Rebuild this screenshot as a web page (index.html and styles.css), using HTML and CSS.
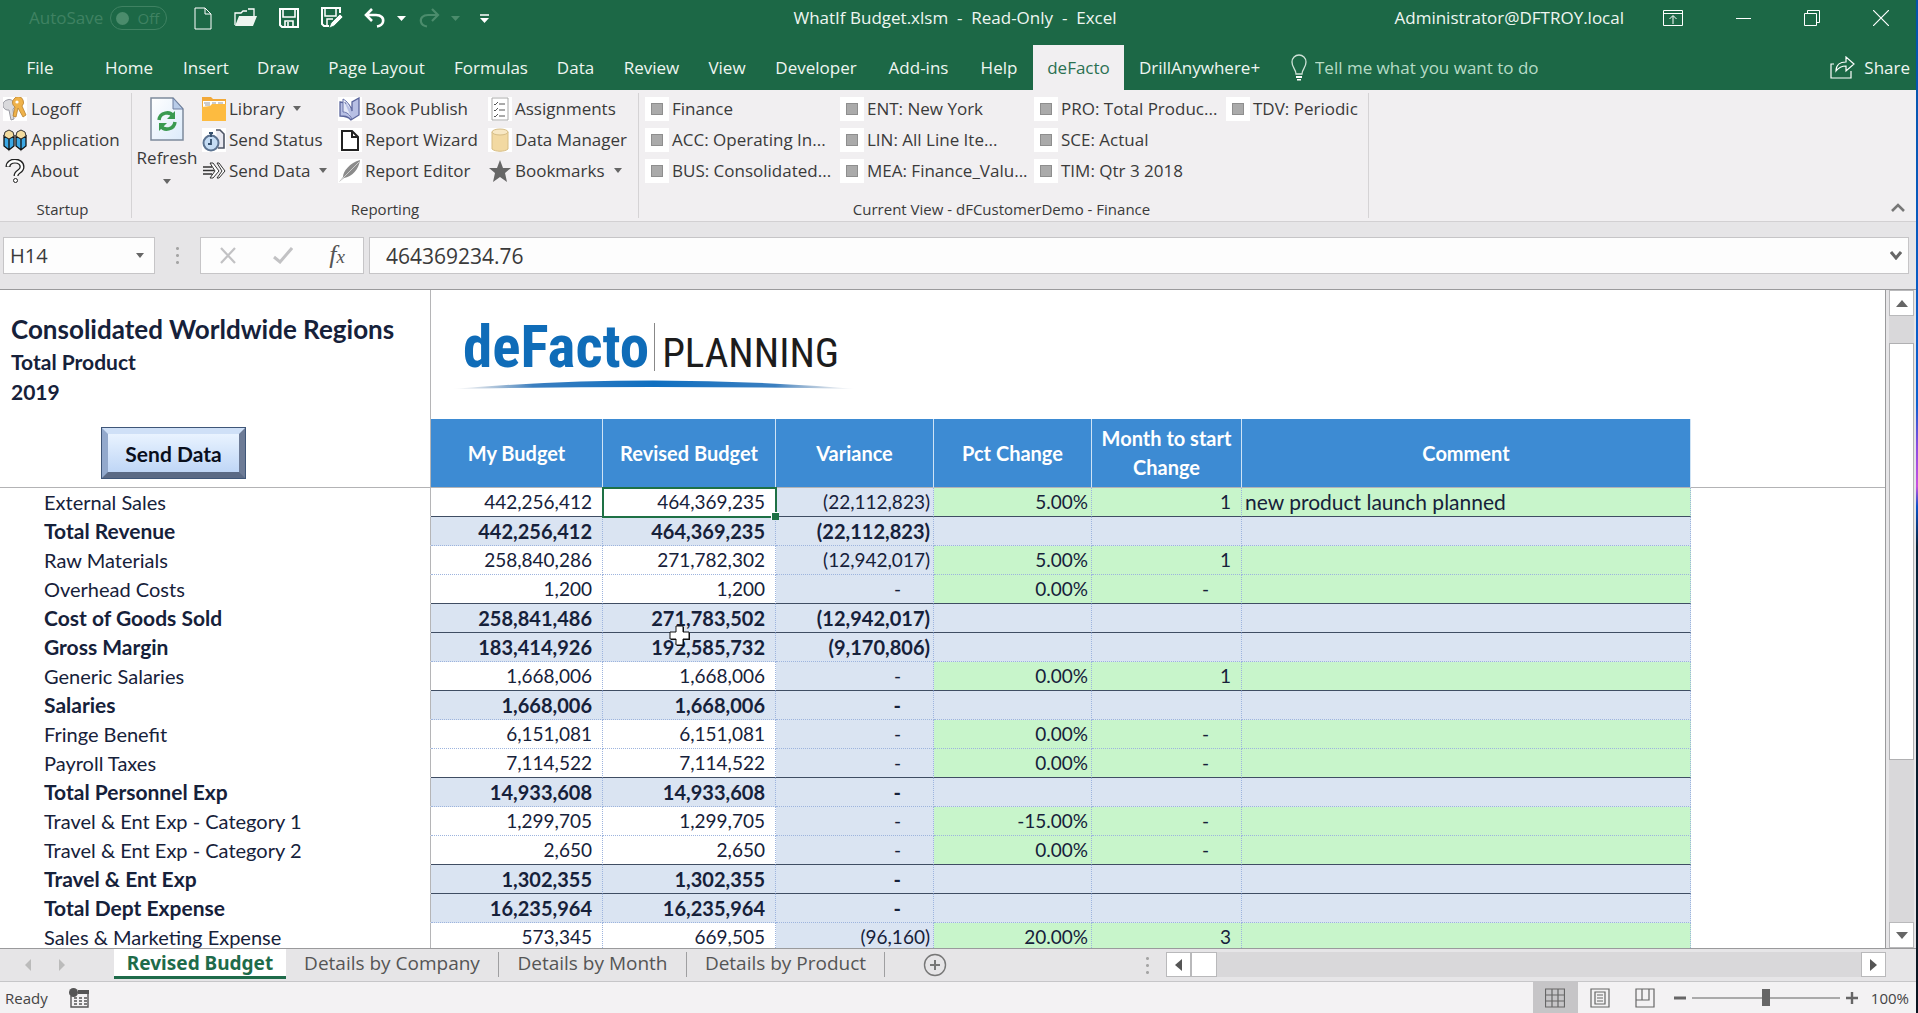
FILE: index.html
```html
<!DOCTYPE html>
<html lang="en">
<head>
<meta charset="utf-8">
<title>WhatIf Budget.xlsm - Read-Only - Excel</title>
<link rel="stylesheet" href="styles.css">
</head>
<body>
<div class="window">
<header class="top">
  <div class="titlebar">
    <div class="quick">
      <label class="autosave">AutoSave<span class="toggle"><input type="checkbox" disabled><span>Off</span></span></label>
      <button class="qbtn" aria-label="New"><svg width="18" height="23" viewBox="0 0 18 23"><path d="M1 1h10l6 6v15H1zM11 1v6h6" fill="none" stroke="#fff"/></svg></button>
      <button class="qbtn" aria-label="Open"><svg width="23" height="20" viewBox="0 0 23 20"><path d="M1 17V5h6l2-2h4M14 1h6v7" fill="none" stroke="#fff" stroke-width="1.3"/><path d="M5 8h18l-4 10H1z" fill="#eef5f0"/></svg></button>
      <button class="qbtn" aria-label="Save"><svg width="20" height="20" viewBox="0 0 20 20"><path d="M1 1h18v18H3l-2-2z" fill="none" stroke="#fff" stroke-width="2"/><path d="M4 2v7h12V2M6 19v-6h8v6M9 14v5" fill="none" stroke="#fff" stroke-width="1.6"/></svg></button>
      <button class="qbtn saveas" aria-label="Save as"><svg width="23" height="22" viewBox="0 0 23 22"><path d="M19 6V1H1v16l2 2h5" fill="none" stroke="#fff" stroke-width="2"/><path d="M4 2v7h11V2M6 18v-6h6" fill="none" stroke="#fff" stroke-width="1.5"/><path d="M8 21l2-5L19 7l3 3-9 9z" fill="#fff" stroke="#1c6846" stroke-width=".7"/></svg></button>
      <button class="qbtn undo" aria-label="Undo"><svg width="22" height="20" viewBox="0 0 22 20"><path d="M8 1L2 7l6 6M2 7h10c5 0 8 3 7 7-.6 2.500-3 4-6 4.500" fill="none" stroke="#fff" stroke-width="2.600"/></svg><svg width="9" height="5" viewBox="0 0 9 5"><path d="M0 0h9L4.500 5z" fill="#fff"/></svg></button>
      <button class="qbtn redo" aria-label="Redo"><svg width="22" height="20" viewBox="0 0 22 20"><path d="M14 1l6 6-6 6M20 7H10C5 7 2 10 3 14c.6 2.500 3 4 6 4.500" fill="none" stroke="#4b8c6c" stroke-width="2.200"/></svg><svg width="9" height="5" viewBox="0 0 9 5"><path d="M0 0h9L4.500 5z" fill="#4b8c6c"/></svg></button>
      <button class="qbtn" aria-label="Customize"><svg width="9" height="9" viewBox="0 0 9 9"><path d="M0 1h9" stroke="#fff" stroke-width="1.500"/><path d="M0 4h9L4.500 9z" fill="#fff"/></svg></button>
    </div>
    <h1 class="doc">WhatIf Budget.xlsm&nbsp; -&nbsp; Read-Only&nbsp; -&nbsp; Excel</h1>
    <div class="wctl">
      <span class="user">Administrator@DFTROY.local</span>
      <button aria-label="Ribbon display"><svg width="20" height="16" viewBox="0 0 20 16"><path d="M.5.5h19v15H.5zM.5 3.500h19M10 14V6M6.500 9L10 5.500 13.500 9" fill="none" stroke="#fff"/></svg></button>
      <button aria-label="Minimize"><svg width="15" height="16" viewBox="0 0 15 16"><path d="M0 8.500h15" stroke="#fff"/></svg></button>
      <button aria-label="Restore"><svg width="16" height="16" viewBox="0 0 16 16"><path d="M.5 3.500h12v12H.5zM3.500 3V.5h12v12H13" fill="none" stroke="#fff"/></svg></button>
      <button aria-label="Close"><svg width="16" height="16" viewBox="0 0 16 16"><path d="M0 0l16 16M16 0L0 16" stroke="#fff" stroke-width="1.200"/></svg></button>
    </div>
  </div>
  <nav class="tabs">
    <button class="file">File</button><button>Home</button><button>Insert</button><button>Draw</button><button>Page Layout</button><button>Formulas</button><button>Data</button><button>Review</button><button>View</button><button>Developer</button><button>Add-ins</button><button>Help</button><button class="on">deFacto</button><button>DrillAnywhere+</button>
    <label class="tell"><svg width="16" height="27" viewBox="0 0 16 27"><path d="M5 20c0-5-4-6-4-12a7 7 0 0 1 14 0c0 6-4 7-4 12z" fill="none" stroke="#cfe3d8" stroke-width="1.300"/><path d="M5 22h6v2H5zM6 25h4v1.500H6z" fill="#fff"/></svg><input type="text" placeholder="Tell me what you want to do" aria-label="Tell me what you want to do"></label>
    <button class="share"><svg width="25" height="23" viewBox="0 0 25 23"><path d="M4 8H1v14h20v-7" fill="none" stroke="#fff" stroke-width="1.200"/><path d="M6 15c0-6 4-9 10-9V1l8 7-8 7v-5c-4 0-7 1-10 5z" fill="none" stroke="#fff" stroke-width="1.200"/></svg>Share</button>
  </nav>
</header>

<section class="ribbon">
  <div class="group g-start">
    <div class="cmds start">
      <div class="col">
        <button><svg width="24" height="24" viewBox="0 0 24 24"><path fill="#fff" d="M0 0h24v24H0z"/><path d="M4 3a5 5 0 0 1 7 3 4 4 0 0 1-1 6l1 10-3 1-2-10A5 5 0 0 1 4 3z" fill="#d9d9dc" stroke="#9a9aa2"/><path d="M11 2a5 5 0 0 1 9 1 5 5 0 0 1-1 6l4 9-3 2-5-9-2 9-3-1 2-9a5 5 0 0 1-1-8z" fill="#efb24a" stroke="#b9822f" stroke-width=".8"/><circle cx="14" cy="5" r="1.600" fill="#fff"/></svg>Logoff</button>
        <button><svg width="24" height="24" viewBox="0 0 24 24"><path d="M1 8l5 3v11l-5-4zM11 8l-5 3v11l5-4zM13 8l5 3v11l-5-4zM23 8l-5 3v11l5-4z" fill="#3ba7e4" stroke="#111" stroke-width="1.300"/><path d="M6 2l4 2 1 4-5 3-5-3 1-4zM18 2l4 2 1 4-5 3-5-3 1-4z" fill="#f3dca0" stroke="#333"/></svg>Application</button>
        <button><svg width="24" height="24" viewBox="0 0 24 24"><path d="M5 8c0-8 14-8 14 0 0 5-6 4-6 9" fill="none" stroke="#222" stroke-width="5"/><path d="M5 7.500c0-7 14-7 14 .5 0 5-6 4-6 9" fill="none" stroke="#fff" stroke-width="2.400"/><circle cx="12.500" cy="21.500" r="2" fill="#fff" stroke="#222"/></svg>About</button>
      </div>
    </div>
    <p>Startup</p>
  </div>
  <div class="group g-rep">
    <div class="cmds rep">
      <button class="refresh"><svg width="34" height="44" viewBox="0 0 34 44"><defs><linearGradient id="pg" x2="1" y2="1"><stop offset="0" stop-color="#fff"/><stop offset="1" stop-color="#dcebfb"/></linearGradient></defs><path d="M1 1h22l10 11v31H1z" fill="url(#pg)" stroke="#7d8a9c" stroke-width="1.500"/><path d="M23 1v11h10z" fill="#b9cce8" stroke="#6e7fa0"/><path d="M9 23c1-8 11-9 14-4M25 25c-1 8-11 9-14 4" fill="none" stroke="#3a9a50" stroke-width="3.500"/><path d="M25 14v8h-8zM9 34v-8h8z" fill="#3a9a50"/></svg>Refresh<i class="dd"></i></button>
      <div class="col">
        <button><svg width="24" height="24" viewBox="0 0 24 24"><path d="M0 4V0h9l2 2h13v22H0z" fill="#f2a93a"/><path d="M1 4h22v6H1z" fill="#fff"/><path d="M2 6h6M10 6h4M16 6h5M3 8h5" stroke="#999"/><path d="M0 10l8-1 2-2h14v17H0z" fill="#fdbb40"/></svg>Library<i class="dd"></i></button>
        <button><svg width="24" height="24" viewBox="0 0 24 24"><path fill="#fff" d="M0 0h24v24H0z"/><path d="M14 2h4l4 4v14h-6" fill="#e8e8f0" stroke="#4d5464" stroke-width="1.600"/><circle cx="9" cy="15" r="7.500" fill="#c5dcf4" stroke="#5c7391" stroke-width="2"/><path d="M7 5h4M9 5v4M9 11v5h-3" stroke="#36506e" stroke-width="1.800" fill="none"/></svg>Send Status</button>
        <button><svg width="24" height="24" viewBox="0 0 24 24"><path d="M1 8h9M1 11.500h11M1 15h9" stroke="#333" stroke-width="1.500"/><path d="M8 4h3l6 8-6 7H8l5-7zM15 4h2l6 8-6 7h-2l5-7z" fill="#fff" stroke="#333"/></svg>Send Data<i class="dd"></i></button>
      </div>
      <div class="col">
        <button><svg width="24" height="24" viewBox="0 0 24 24"><path fill="#fff" d="M0 0h24v24H0z"/><path d="M2 5l6 1c3 1 5 4 6 8V5l7-4v17l-8 5c-3-4-7-4-11-4z" fill="#b7bfe4" stroke="#5b659c" stroke-width="1.300"/><path d="M5 2c4 2 7 6 9 12M5 2v13c4 0 7 3 9 7" fill="#e3e7f7" stroke="#6a74aa"/></svg>Book Publish</button>
        <button><svg width="24" height="24" viewBox="0 0 24 24"><path fill="#fff" d="M0 0h24v24H0z"/><path d="M4 3h10l6 6v13H4zM14 3v6h6" fill="#fff" stroke="#222" stroke-width="2"/></svg>Report Wizard</button>
        <button><svg width="24" height="24" viewBox="0 0 24 24"><path fill="#fff" d="M0 0h24v24H0z"/><path d="M22 1C12 4 5 12 5 18l-4 5 5-4c8-1 15-9 16-18z" fill="#8b8b8b"/><path d="M2 22L21 3" stroke="#ccc"/></svg>Report Editor</button>
      </div>
      <div class="col">
        <button><svg width="24" height="24" viewBox="0 0 24 24"><path fill="#fff" d="M0 0h24v24H0z"/><path d="M4 1h16v22H4z" fill="#fff" stroke="#aaa"/><path d="M6 7l1 1 3-3M11 7h6M6 13l1 1 3-3M11 13h6M6 19l1 1 3-3M11 19h6" fill="none" stroke="#555"/></svg>Assignments</button>
        <button><svg width="24" height="24" viewBox="0 0 24 24"><path fill="#fff" d="M0 0h24v24H0z"/><path d="M4 4v17c3 3 13 3 16 0V4z" fill="#f2d9a2" stroke="#d6bd86"/><ellipse cx="12" cy="4" rx="8" ry="3" fill="#f8e8c4" stroke="#d6bd86"/></svg>Data Manager</button>
        <button><svg width="24" height="24" viewBox="0 0 24 24"><path d="M12 1l3 8h8l-6 5 2 9-7-5-7 5 2-9-6-5h8z" fill="#666"/></svg>Bookmarks<i class="dd"></i></button>
      </div>
    </div>
    <p>Reporting</p>
  </div>
  <div class="group g-view">
    <div class="cmds view">
      <div class="col"><button><b class="sq"></b>Finance</button><button><b class="sq"></b>ACC: Operating In...</button><button><b class="sq"></b>BUS: Consolidated...</button></div>
      <div class="col"><button><b class="sq"></b>ENT: New York</button><button><b class="sq"></b>LIN: All Line Ite...</button><button><b class="sq"></b>MEA: Finance_Valu...</button></div>
      <div class="col"><button><b class="sq"></b>PRO: Total Produc...</button><button><b class="sq"></b>SCE: Actual</button><button><b class="sq"></b>TIM: Qtr 3 2018</button></div>
      <div class="col"><button><b class="sq"></b>TDV: Periodic</button></div>
    </div>
    <p>Current View - dFCustomerDemo - Finance</p>
  </div>
  <button class="collapse" aria-label="Collapse ribbon"><svg width="14" height="9" viewBox="0 0 14 9"><path d="M1 8l6-6 6 6" fill="none" stroke="#777" stroke-width="2.600"/></svg></button>
</section>

<section class="fbar">
  <div class="box name"><input type="text" value="H14" aria-label="Name box"><i class="dd"></i></div>
  <span class="grip"></span>
  <div class="box fx">
    <button aria-label="Cancel"><svg width="18" height="17" viewBox="0 0 18 17"><path d="M2 1l14 15M16 1L2 16" stroke="#c2c2c4" stroke-width="2.200"/></svg></button>
    <button aria-label="Enter"><svg width="20" height="17" viewBox="0 0 20 17"><path d="M1 10l6 5L19 1" fill="none" stroke="#c2c2c4" stroke-width="3"/></svg></button>
    <button class="fn" aria-label="Insert function">f<small>x</small></button>
  </div>
  <div class="box formula"><input type="text" value="464369234.76" aria-label="Formula"><button aria-label="Expand"><svg width="12" height="9" viewBox="0 0 12 9"><path d="M1 1l5 6 5-6" fill="none" stroke="#666" stroke-width="3"/></svg></button></div>
</section>

<main class="work">
  <div class="sheet">
    <div class="head">
      <div class="titles"><h2>Consolidated Worldwide Regions</h2><p>Total Product</p><p>2019</p></div>
      <div class="logo">
        <div class="words"><span class="de">deFacto</span><span class="pl">PLANNING</span></div>
        <svg width="404" height="10" viewBox="0 0 404 10"><defs><linearGradient id="arc"><stop offset="0" stop-color="#8a9bb0" stop-opacity="0"/><stop offset=".2" stop-color="#3b7fc0"/><stop offset=".5" stop-color="#0f6fc0"/><stop offset=".8" stop-color="#3b7fc0"/><stop offset="1" stop-color="#8a9bb0" stop-opacity="0"/></linearGradient></defs><path d="M0 9Q200-8 404 9Q200 5 0 9z" fill="url(#arc)"/></svg>
      </div>
    </div>
    <table>
      <colgroup><col class="c0"><col class="c1"><col class="c2"><col class="c3"><col class="c3"><col class="c5"><col class="c6"><col></colgroup>
      <thead><tr><th class="corner"><button class="send">Send Data</button></th><th>My Budget</th><th>Revised Budget</th><th>Variance</th><th>Pct Change</th><th>Month to start Change</th><th>Comment</th><td></td></tr></thead>
      <tbody>
        <tr class="pre"><th>External Sales</th><td>442,256,412</td><td class="sel">464,369,235</td><td>(22,112,823)</td><td>5.00%</td><td>1</td><td>new product launch planned</td><td></td></tr>
        <tr class="tot"><th>Total Revenue</th><td>442,256,412</td><td>464,369,235</td><td>(22,112,823)</td><td></td><td></td><td></td><td></td></tr>
        <tr><th>Raw Materials</th><td>258,840,286</td><td>271,782,302</td><td>(12,942,017)</td><td>5.00%</td><td>1</td><td></td><td></td></tr>
        <tr class="pre"><th>Overhead Costs</th><td>1,200</td><td>1,200</td><td class="dash">-</td><td>0.00%</td><td class="dash">-</td><td></td><td></td></tr>
        <tr class="tot pre"><th>Cost of Goods Sold</th><td>258,841,486</td><td class="hover">271,783,502<svg class="cursor" width="22" height="22" viewBox="0 0 22 22"><path d="M8 2h7v6h6v7h-6v6H8v-6H2V8h6z" fill="#111"/><path d="M7 1h7v6h6v7h-6v6H7v-6H1V7h6z" fill="#fff" stroke="#111"/></svg></td><td>(12,942,017)</td><td></td><td></td><td></td><td></td></tr>
        <tr class="tot"><th>Gross Margin</th><td>183,414,926</td><td>192,585,732</td><td>(9,170,806)</td><td></td><td></td><td></td><td></td></tr>
        <tr class="pre"><th>Generic Salaries</th><td>1,668,006</td><td>1,668,006</td><td class="dash">-</td><td>0.00%</td><td>1</td><td></td><td></td></tr>
        <tr class="tot"><th>Salaries</th><td>1,668,006</td><td>1,668,006</td><td class="dash">-</td><td></td><td></td><td></td><td></td></tr>
        <tr><th>Fringe Benefit</th><td>6,151,081</td><td>6,151,081</td><td class="dash">-</td><td>0.00%</td><td class="dash">-</td><td></td><td></td></tr>
        <tr class="pre"><th>Payroll Taxes</th><td>7,114,522</td><td>7,114,522</td><td class="dash">-</td><td>0.00%</td><td class="dash">-</td><td></td><td></td></tr>
        <tr class="tot"><th>Total Personnel Exp</th><td>14,933,608</td><td>14,933,608</td><td class="dash">-</td><td></td><td></td><td></td><td></td></tr>
        <tr><th>Travel &amp; Ent Exp - Category 1</th><td>1,299,705</td><td>1,299,705</td><td class="dash">-</td><td>-15.00%</td><td class="dash">-</td><td></td><td></td></tr>
        <tr class="pre"><th>Travel &amp; Ent Exp - Category 2</th><td>2,650</td><td>2,650</td><td class="dash">-</td><td>0.00%</td><td class="dash">-</td><td></td><td></td></tr>
        <tr class="tot pre"><th>Travel &amp; Ent Exp</th><td>1,302,355</td><td>1,302,355</td><td class="dash">-</td><td></td><td></td><td></td><td></td></tr>
        <tr class="tot"><th>Total Dept Expense</th><td>16,235,964</td><td>16,235,964</td><td class="dash">-</td><td></td><td></td><td></td><td></td></tr>
        <tr><th>Sales &amp; Marketing Expense</th><td>573,345</td><td>669,505</td><td>(96,160)</td><td>20.00%</td><td>3</td><td></td><td></td></tr>
      </tbody>
    </table>
  </div>
  <div class="vscroll">
    <button aria-label="Scroll up"><svg width="12" height="7" viewBox="0 0 12 7"><path d="M0 7h12L6 0z" fill="#666"/></svg></button>
    <div class="vtrack"><div class="vthumb"></div></div>
    <button aria-label="Scroll down"><svg width="12" height="7" viewBox="0 0 12 7"><path d="M0 0h12L6 7z" fill="#666"/></svg></button>
  </div>
</main>

<section class="sheets">
  <div class="nav"><button aria-label="Previous"><svg width="6" height="12" viewBox="0 0 6 12"><path d="M6 0v12L0 6z" fill="#bbb"/></svg></button><button aria-label="Next"><svg width="6" height="12" viewBox="0 0 6 12"><path d="M0 0v12l6-6z" fill="#bbb"/></svg></button></div>
  <button class="stab cur">Revised Budget</button><button class="stab s1">Details by Company</button><button class="stab s2">Details by Month</button><button class="stab s3">Details by Product</button>
  <button class="add" aria-label="New sheet"><svg width="24" height="24" viewBox="0 0 24 24"><circle cx="12" cy="12" r="10.500" fill="none" stroke="#777" stroke-width="1.400"/><path d="M12 7v10M7 12h10" stroke="#777" stroke-width="2"/></svg></button>
  <span class="grip"></span>
  <div class="hscroll">
    <button aria-label="Scroll left"><svg width="7" height="12" viewBox="0 0 7 12"><path d="M7 0v12L0 6z" fill="#555"/></svg></button>
    <div class="hthumb"></div>
    <button class="end" aria-label="Scroll right"><svg width="7" height="12" viewBox="0 0 7 12"><path d="M0 0v12l7-6z" fill="#555"/></svg></button>
  </div>
</section>

<footer class="status">
  <span>Ready</span>
  <svg class="macro" width="20" height="20" viewBox="0 0 20 20"><path d="M2 8v11h17V3H9" fill="none" stroke="#555" stroke-width="1.400"/><path d="M9 2h11v4H9z" fill="#555"/><circle cx="4.500" cy="4.500" r="4.500" fill="#555"/><path d="M5 10h3M10 10h3M15 10h3M5 13h3M10 13h3M15 13h3M5 16h3M10 16h3M15 16h3" stroke="#555" stroke-width="1.300"/></svg>
  <div class="views">
    <button class="act" aria-label="Normal"><svg width="20" height="20" viewBox="0 0 20 20"><path d="M.5 1h19v18H.5zM7 1v18M13 1v18M.5 7h19M.5 13h19" fill="none" stroke="#666" stroke-width="1.200"/></svg></button>
    <button aria-label="Page layout"><svg width="20" height="20" viewBox="0 0 20 20"><path d="M1 1h18v18H1zM5 4h10v12H5zM7 7h6M7 10h6M7 13h6" fill="none" stroke="#666" stroke-width="1.200"/></svg></button>
    <button aria-label="Page break"><svg width="20" height="20" viewBox="0 0 20 20"><path d="M1 1h18v18H1zM1 12h13V1M7 1v11" fill="none" stroke="#666" stroke-width="1.200"/></svg></button>
  </div>
  <div class="zoom">
    <button aria-label="Zoom out"><svg width="12" height="12" viewBox="0 0 12 12"><path d="M0 6h12" stroke="#666" stroke-width="3"/></svg></button>
    <input type="range" min="0" max="100" value="50" aria-label="Zoom">
    <button aria-label="Zoom in"><svg width="12" height="12" viewBox="0 0 12 12"><path d="M0 6h12M6 0v12" stroke="#666" stroke-width="2.400"/></svg></button>
    <span>100%</span>
  </div>
</footer>
</div>
</body>
</html>
```
FILE: styles.css
```css
* { box-sizing: border-box; }
body {
  margin: 0;
  height: 100vh;
  padding-right: 2px;
  font: 17px/24px "Open Sans", "Noto Sans", sans-serif;
  color: #3a3a3a;
  background: linear-gradient(#0653a8 0, #0a5fd0 40%, #8a4be0 44%, #c850e0 48%, #0a50c8 50%, #06233a 54%, #0a1420 100%);
}
button, input { font: inherit; color: inherit; border: 0; background: none; padding: 0; margin: 0; }
svg { display: block; flex: none; }
h1, h2, p { margin: 0; font-size: inherit; font-weight: inherit; }
.window { height: 100%; display: flex; flex-direction: column; background: #e6e5e7; overflow: hidden; }

/* title bar and tabs */
.top { background: #1c6846; color: #eef6f1; }
.titlebar { display: grid; grid-template-columns: 1fr auto 1fr; height: 45px; padding-bottom: 9px; align-items: center; }
.quick { display: flex; align-items: center; padding-left: 29px; }
.autosave { display: flex; align-items: center; gap: 7px; color: #3f8262; margin-right: 27px; }
.toggle { display: flex; align-items: center; justify-content: space-between; width: 57px; height: 24px; padding: 0 7px 0 5px; border: 1px solid #3f8262; border-radius: 12px; font-size: 15px; }
.toggle input { appearance: none; width: 13px; height: 13px; border-radius: 50%; background: #4b8c6c; }
.qbtn { display: flex; align-items: center; gap: 11px; margin-right: 22px; }
.saveas { margin-right: 20px; }
.undo { margin-right: 12px; }
.redo { margin-right: 20px; }
.doc { padding-right: 6px; white-space: pre; font-weight: 400; }
.wctl { display: flex; align-items: center; justify-content: flex-end; padding-right: 27px; gap: 53px; }
.user { margin-right: -14px; }
.tabs { display: grid; grid-template-columns: 89px 80px 74px 70px 127px 102px 67px 85px 66px 112px 93px 68px 91px 151px 1fr auto; height: 45px; }
.tabs button { white-space: nowrap; text-align: center; }
.tabs .file { padding-right: 9px; }
.tabs .on { background: #f1eff1; color: #2b7152; }
.tell { display: flex; align-items: center; gap: 8px; padding-left: 16px; }
.tell input { flex: 1; max-width: 300px; color: #b7dcc6; }
.tell input::placeholder { color: #b7dcc6; opacity: 1; }
.tabs .share { display: flex; align-items: center; gap: 9px; padding-right: 6px; }

/* ribbon */
.ribbon { display: flex; height: 132px; background: #f1eff1; border-bottom: 1px solid #d2d0d2; padding: 3px 0; }
.group { display: flex; flex-direction: column; justify-content: space-between; border-right: 1px solid #d5d3d5; height: 125px; }
.group p { text-align: center; font-size: 15px; line-height: 18px; }
.g-start { width: 132px; }
.g-start p { padding-right: 6px; }
.g-rep { width: 507px; }
.g-view { width: 730px; }
.g-view p { padding-right: 4px; }
.cmds { display: grid; }
.start { padding-left: 3px; }
.rep { grid-template-columns: 70px 136px 150px 150px; }
.view { grid-template-columns: 195px 194px 192px 142px; padding-left: 6px; }
.col button { display: flex; align-items: center; gap: 3px; height: 31px; white-space: nowrap; }
.start button { gap: 4px; }
.dd { display: inline-block; border: 4px solid transparent; border-top: 5px solid #666; border-bottom: 0; margin-left: 6px; }
.refresh { display: flex; flex-direction: column; align-items: center; padding-top: 4px; line-height: 34px; }
.refresh .dd { margin: 4px 0 0; }
.sq { width: 24px; height: 24px; border: 6px solid #fff; background: #aaa; box-shadow: inset 0 0 0 1px #8e8e8e; }
.collapse { margin: auto 11px 6px auto; }

/* formula bar */
.fbar { display: flex; padding: 15px 7px 15px 3px; border-bottom: 1px solid #9a9a9c; height: 68px; }
.box { display: flex; align-items: center; height: 37px; background: #fdfdfd; border: 1px solid #c6c5c7; }
.box input { font-size: 20px; min-width: 0; flex: 1; }
.name { width: 152px; padding: 0 10px 0 6px; }
.grip { width: 3px; height: 20px; background: radial-gradient(circle, #a5a5a5 1px, transparent 2px) 0 0 / 3px 7px; }
.fbar .grip { margin: 8px 21px; }
.fx { width: 164px; justify-content: space-between; padding: 0 18px; margin-right: 5px; }
.fn { font: italic 26px/30px "Liberation Serif", serif; color: #555; }
.fn small { font-size: 19px; }
.formula { flex: 1; padding: 0 6px 0 16px; }
.formula input { font-size: 21px; }

/* worksheet */
.work { flex: 1 1 0; min-height: 0; display: flex; }
.sheet { flex: 1; min-width: 0; overflow: hidden; background: #fff; border-right: 1px solid #9a9a9c; color: #16213a; font-family: Lato, sans-serif; }
.head { display: flex; height: 129px; }
.titles { width: 431px; border-right: 1px solid #b5b5b7; padding: 21px 11px 0; font-weight: 700; font-size: 21px; line-height: 30px; white-space: nowrap; }
.titles h2 { font-size: 26px; line-height: 36px; }
.logo { padding: 20px 0 0 21px; }
.words { display: flex; align-items: baseline; padding: 13px 0 0 11px; height: 70px; font-family: "Liberation Sans Narrow", "Roboto Condensed", "Open Sans Condensed", "Liberation Sans", sans-serif; white-space: nowrap; }
.de { font-size: 59px; line-height: 48px; color: #0f6cb8; font-weight: 700; border-right: 1px solid #888; padding-right: 5px; }
.pl { font-size: 41px; line-height: 48px; color: #1c1c1c; font-weight: 400; padding-left: 7px; }
table { width: 100%; table-layout: fixed; border-collapse: separate; border-spacing: 0; font-size: 19px; line-height: 24px; }
.c0 { width: 431px; }
.c1 { width: 172px; }
.c2 { width: 173px; }
.c3 { width: 158px; }
.c5 { width: 150px; }
.c6 { width: 449px; }
th, td { padding: 0; overflow: hidden; white-space: nowrap; }
thead th { height: 69px; background: #3d8bd3; color: #fff; font-size: 20px; line-height: 29px; border-right: 1px solid #cfe3f5; white-space: normal; }
thead th, thead td { border-bottom: 1px solid #b3b3b5; }
thead .corner { background: #fff; border-right-color: #b5b5b7; text-align: left; padding-left: 101px; }
.send { display: block; width: 145px; height: 52px; border: 7px solid; border-color: #cfe0f7 #6d7b96 #5b6a85 #93a9cc; background: linear-gradient(#e9f3ff, #bfd6f6); outline: 1px solid #3f5678; outline-offset: -1px; font-size: 21px; font-weight: 700; color: #0a0f1c; white-space: nowrap; }
tbody tr { height: 29px; }
tbody th { text-align: left; font-weight: 400; font-size: 20px; padding-left: 44px; border-right: 1px solid #b5b5b7; border-bottom: 1px solid #fff; }
tbody td { text-align: right; border-right: 1px dotted #9db4de; border-bottom: 1px dotted #9db4de; padding-right: 10px; }
tbody td:nth-child(4) { background: #dae4f2; padding-right: 3px; }
tbody td:nth-child(5) { background: #c8f5cb; padding-right: 3px; }
tbody td:nth-child(6) { background: #c8f5cb; }
tbody td:nth-child(7) { background: #c8f5cb; text-align: left; font-size: 21px; padding: 0 0 0 3px; }
tbody td.dash:nth-child(n) { padding-right: 32px; }
.tot th { font-weight: 700; font-size: 21px; }
.tot td:nth-child(n) { background: #dae4f2; font-weight: 700; font-size: 20px; }
.pre td { border-bottom: 1px solid #3f4d63; }
tbody td:nth-child(n+8) { background: none; border: 0; }
.tot td:nth-child(n+8) { background: none; }
.sel, .hover { position: relative; overflow: visible; }
.sel::before { content: ""; position: absolute; inset: -1px -2px -2px -1px; border: 2px solid #1e7145; z-index: 1; }
.sel::after { content: ""; position: absolute; right: -4px; bottom: -4px; width: 7px; height: 7px; background: #1e7145; border: 1px solid #fff; border-width: 1px 0 0 1px; z-index: 2; }
.cursor { position: absolute; left: 66px; top: 21px; z-index: 2; }
.vscroll { width: 30px; padding: 0 2px 0 3px; display: flex; flex-direction: column; }
.vscroll button { height: 26px; display: grid; place-items: center; background: #fff; border: 1px solid #b9b9bb; }
.vtrack { flex: 1; background: #d9d8da; padding-top: 27px; }
.vthumb { height: 72%; background: #fff; border: 1px solid #b0b0b2; }

/* sheet tabs */
.sheets { display: flex; height: 34px; border-top: 1px solid #9a9a9c; border-bottom: 1px solid #c6c6c8; padding-right: 30px; font-size: 19px; line-height: 22px; color: #555; }
.nav { width: 114px; display: flex; align-items: center; gap: 28px; padding-left: 25px; }
.stab { height: 30px; text-align: center; white-space: nowrap; padding-bottom: 3px; }
.s1 { width: 213px; }
.s2 { width: 188px; }
.s3 { width: 198px; }
.s1, .s2, .s3 { border-right: 1px solid #9f9fa1; height: 25px; margin-top: 3px; }
.cur { width: 172px; background: #fff; border-bottom: 3px solid #1e6b4a; color: #1e6b4a; font-weight: 700; font-family: "Noto Sans", sans-serif; padding-bottom: 0; }
.add { margin-left: 38px; }
.sheets .grip { margin: 6px 17px 0 auto; }
.hscroll { display: flex; width: 720px; height: 25px; margin-top: 3px; background: #d9d8da; }
.hscroll button, .hthumb { width: 25px; display: grid; place-items: center; background: #fff; border: 1px solid #b9b9bb; }
.hthumb { width: 26px; }
.hscroll .end { margin-left: auto; }

/* status bar */
.status { display: flex; align-items: center; height: 31px; background: #f3f2f3; padding: 0 7px 0 5px; font-size: 15px; color: #444; }
.macro { margin-left: 21px; }
.views { display: flex; margin-left: auto; height: 100%; }
.views button { width: 45px; display: grid; place-items: center; }
.views .act { background: #c6c5c7; }
.zoom { display: flex; align-items: center; gap: 6px; margin-left: 6px; }
.zoom span { margin-left: 7px; }
.zoom input { appearance: none; width: 148px; height: 18px; background: linear-gradient(#aaa, #aaa) center / 100% 2px no-repeat; }
.zoom input::-webkit-slider-thumb { appearance: none; width: 8px; height: 17px; background: #666; }
```
